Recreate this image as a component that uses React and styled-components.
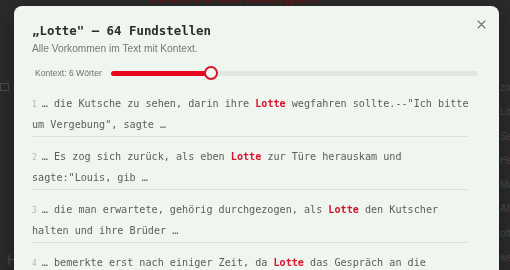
import React from "react";
import styled, { createGlobalStyle } from "styled-components";

const GlobalStyle = createGlobalStyle`
  html, body {
    margin: 0;
    padding: 0;
    background: #2b2b2b;
    height: 270px;
    overflow: hidden;
  }
  #root {
    height: 270px;
  }
`;

const MONO = `"DejaVu Sans Mono", "Liberation Mono", monospace`;
const SANS = `"Liberation Sans", Arial, sans-serif`;

/* ---------- dimmed page behind the overlay ---------- */

const Page = styled.div`
  height: 270px;
  display: grid;
  grid-template-columns: 14px 1fr 10px;
  background: #2b2b2b;
  font-family: ${SANS};
  overflow: hidden;
`;

const LeftRail = styled.div`
  display: flex;
  flex-direction: column;
  justify-content: space-between;
  padding: 83px 0 2px 0;
`;

const RailIcon = styled.div`
  width: 9px;
  height: 8px;
  border: 1px solid #4a4a4a;
  box-sizing: border-box;
`;

const RailLetter = styled.div`
  color: #4a4a4a;
  font-size: 14px;
  margin-left: 7px;
  line-height: 16px;
`;

const Main = styled.div`
  display: flex;
  justify-content: center;
`;

const PageTitle = styled.h1`
  margin: -14px 0 0 0;
  font-size: 19px;
  font-weight: bold;
  color: #5c1717;
  font-family: ${SANS};
  padding-right: 50px;
`;

const RightRail = styled.div`
  display: flex;
  flex-direction: column;
  gap: 10.3px;
  padding-top: 81px;
`;

const RailItem = styled.div`
  color: #4a4a4a;
  font-size: 10px;
  line-height: 14px;
  white-space: nowrap;
`;

/* ---------- modal ---------- */

const Modal = styled.div`
  position: fixed;
  left: 14px;
  top: 6px;
  width: 485px;
  height: 300px;
  box-sizing: border-box;
  background: #eff5ef;
  border-radius: 8px;
  padding: 17px 21px 0 18px;
  box-shadow: 0 4px 20px rgba(0, 0, 0, 0.35);
`;

const CloseButton = styled.button`
  position: absolute;
  top: 13px;
  right: 13px;
  width: 10px;
  height: 10px;
  padding: 0;
  border: none;
  background: none;
  display: flex;
  align-items: center;
  justify-content: center;
  cursor: pointer;
`;

const Title = styled.h2`
  margin: 0;
  font-family: ${MONO};
  font-weight: bold;
  font-size: 12.4px;
  line-height: 16px;
  color: #2c2c2c;
`;

const Subtitle = styled.p`
  margin: 3px 0 0 0;
  font-family: ${SANS};
  font-size: 10.2px;
  line-height: 14px;
  color: #767876;
`;

const SliderRow = styled.div`
  display: flex;
  align-items: center;
  gap: 9px;
  height: 16px;
  margin-top: 9px;
  padding-left: 3px;
`;

const SliderLabel = styled.span`
  font-family: ${SANS};
  font-size: 8.6px;
  color: #6f716f;
  white-space: nowrap;
`;

const Track = styled.div`
  position: relative;
  flex: 1;
  height: 5px;
  border-radius: 3px;
  background: #e1e6e1;
`;

const Fill = styled.div`
  height: 100%;
  border-radius: 3px;
  background: #e8071d;
`;

const Thumb = styled.div`
  position: absolute;
  top: 50%;
  width: 14px;
  height: 14px;
  box-sizing: border-box;
  border: 2px solid #d8142c;
  border-radius: 50%;
  background: #f4f6f4;
  transform: translate(-50%, -50%);
`;

const List = styled.div`
  margin-top: 3px;
  padding-right: 9px;
`;

const Item = styled.div`
  padding: 10px 0 1px 0;
  border-bottom: 1px solid #dde2dd;
  font-family: ${MONO};
  font-size: 10.15px;
  line-height: 20px;
  color: #5c5e5c;
`;

const Num = styled.span`
  font-size: 8px;
  color: #b4b6b4;
  margin-right: 5px;
`;

const Hit = styled.strong`
  color: #d8142f;
  font-weight: bold;
`;

const matches = [
  {
    before: "… die Kutsche zu sehen, darin ihre ",
    after: ' wegfahren sollte.--"Ich bitte um Vergebung", sagte …',
  },
  {
    before: "… Es zog sich zurück, als eben ",
    after: ' zur Türe herauskam und sagte:"Louis, gib …',
  },
  {
    before: "… die man erwartete, gehörig durchgezogen, als ",
    after: " den Kutscher halten und ihre Brüder …",
  },
  {
    before: "… bemerkte erst nach einiger Zeit, da ",
    after: " das Gespräch an die Gesellschaft brachte …",
  },
];

const railItems = ["zo", "Lo", "Se", "He", "Ma", "All", "oft", "we"];

export default function App() {
  const context = 6;
  const min = 1;
  const max = 20;
  const frac = (context - min) / (max - min);

  return (
    <>
      <GlobalStyle />
      <Page>
        <LeftRail>
          <RailIcon />
          <RailLetter>H</RailLetter>
        </LeftRail>
        <Main>
          <PageTitle>Wortverbindungen</PageTitle>
        </Main>
        <RightRail>
          {railItems.map((t) => (
            <RailItem key={t}>{t}</RailItem>
          ))}
        </RightRail>
      </Page>

      <Modal>
        <CloseButton aria-label="Schließen">
          <svg width="9" height="9" viewBox="0 0 9 9">
            <path
              d="M1 1 L8 8 M8 1 L1 8"
              stroke="#707270"
              strokeWidth="1.1"
              strokeLinecap="round"
            />
          </svg>
        </CloseButton>
        <Title>„Lotte" — 64 Fundstellen</Title>
        <Subtitle>Alle Vorkommen im Text mit Kontext.</Subtitle>
        <SliderRow>
          <SliderLabel>Kontext: {context} Wörter</SliderLabel>
          <Track>
            <Fill style={{ width: `${frac * 100}%` }} />
            <Thumb style={{ left: `calc(7px + ${frac} * (100% - 14px))` }} />
          </Track>
        </SliderRow>
        <List>
          {matches.map((m, i) => (
            <Item key={i}>
              <Num>{i + 1}</Num>
              {m.before}
              <Hit>Lotte</Hit>
              {m.after}
            </Item>
          ))}
        </List>
      </Modal>
    </>
  );
}
